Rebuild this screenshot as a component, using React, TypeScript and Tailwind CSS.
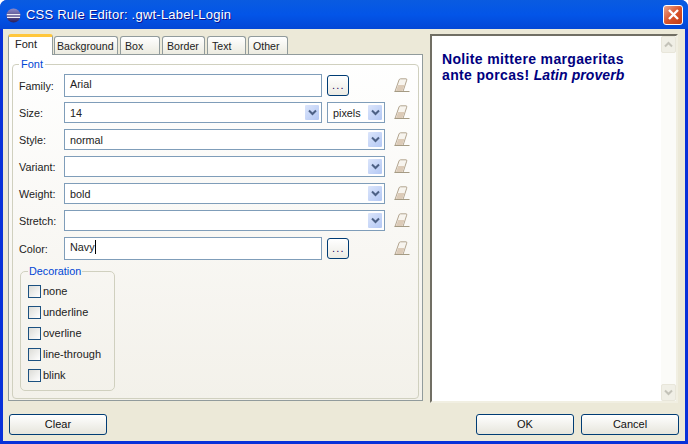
import type { ReactNode } from "react";

const Eraser = () => (
  <svg width="16" height="15" viewBox="0 0 16 15" className="block shrink-0">
    <path d="M1 13.5 L5 2 Q5.5 .8 6.5 .8 L12 .8 Q13.2 .8 12.7 2.2 L9 13.5 Z" fill="#f7f4ee" stroke="#b3a590" />
    <path d="M2 13 L4.2 7 L10.6 7 L8.4 13 Z" fill="#dccbb8" />
    <path d="M.5 13.5 H15.5" stroke="#a59b84" />
  </svg>
);

const Chevron = ({ color = "#4d6185" }: { color?: string }) => (
  <svg width="9" height="7" viewBox="0 0 9 7" className="block">
    <path d="M1 1.5 L4.5 5 L8 1.5" fill="none" stroke={color} strokeWidth="2" />
  </svg>
);

const Arrow = () => (
  <span className="ml-auto flex h-[17px] w-[16px] shrink-0 items-center justify-center rounded-[2px] border border-white bg-gradient-to-br from-[#dbe5fb] to-[#b4c8f4]">
    <Chevron />
  </span>
);

const DotsButton = () => (
  <button className="ml-[5px] flex h-[21px] w-[22px] items-start justify-center rounded-[3px] border border-[#003c74] bg-gradient-to-b from-white to-[#ecebe4] pl-px text-[11px] leading-[19px] tracking-[1.2px] text-[#1a0060]">
    ...
  </button>
);

const Field = ({ label, height, children }: { label: string; height: string; children: ReactNode }) => (
  <div className={`flex items-center ${height}`}>
    <span className="w-[45px] shrink-0 pt-[2px] text-[10.8px] text-[#222]">{label}</span>
    {children}
    <span className="ml-auto mr-[3px]">
      <Eraser />
    </span>
  </div>
);

const TextBox = ({ value, caret }: { value: string; caret?: boolean }) => (
  <div className="flex h-full w-[258px] items-center border border-[#7f9db9] bg-white pb-[3px] pl-[5px] text-[10.8px] text-[#222]">
    {value}
    {caret && <span className="h-[14px] w-px bg-black" />}
  </div>
);

const Select = ({ value, width }: { value: string; width: string }) => (
  <div className={`flex h-full items-center border border-[#7f9db9] bg-white pl-[5px] pr-px text-[10.8px] text-[#222] ${width}`}>
    <span className="pt-px">{value}</span>
    <Arrow />
  </div>
);

const tabs = [
  { name: "Background", width: "w-[64px] pl-[2px]" },
  { name: "Box", width: "w-[40px] pl-[4px]" },
  { name: "Border", width: "w-[43px] pl-[4px]" },
  { name: "Text", width: "w-[39px] pl-[4px]" },
  { name: "Other", width: "w-[40px] pl-[4px]" },
];

const decorations = ["none", "underline", "overline", "line-through", "blink"];

const FormButton = ({ label }: { label: string }) => (
  <button className="block h-[21px] w-[98px] rounded-[3px] border border-[#003c74] bg-gradient-to-b from-white to-[#e6e5dc] text-[11px] text-[#111]">
    {label}
  </button>
);

export default function App() {
  return (
    <div className="flex h-[444px] w-[688px] flex-col overflow-hidden rounded-t-[7px] bg-[#0831d9] font-['Liberation_Sans',sans-serif]">
      <div className="flex h-[29px] shrink-0 items-center bg-gradient-to-b from-[#0a5be0] via-[#0355e8] to-[#0347d6] pl-[6px] pr-[5px]">
        <svg width="15" height="15" viewBox="0 0 15 15" className="mt-[1px]">
          <defs>
            <linearGradient id="eclipse" x1="0" y1="0" x2="0" y2="1">
              <stop offset="0" stopColor="#8d8ac8" />
              <stop offset="1" stopColor="#2a1f5e" />
            </linearGradient>
          </defs>
          <circle cx="7.5" cy="7.5" r="7" fill="url(#eclipse)" />
          <path d="M.8 6.6 H14.2 M1 9.4 H14" stroke="#f0eef6" strokeWidth="1.4" />
        </svg>
        <span className="ml-[5px] text-[13px] tracking-[0.22px] text-white [text-shadow:1px_1px_#0f1089]">
          CSS Rule Editor: .gwt-Label-Login
        </span>
        <span className="ml-auto flex h-[20px] w-[20px] items-center justify-center rounded-[3px] border border-white bg-gradient-to-br from-[#e8a48c] via-[#d9542b] to-[#c23c14]">
          <svg width="13" height="13" viewBox="0 0 13 13">
            <path d="M2 2 L11 11 M11 2 L2 11" stroke="#fff" strokeWidth="2.4" />
          </svg>
        </span>
      </div>

      <div className="mx-[3px] mb-[3px] flex min-h-0 flex-1 flex-col bg-[#ece9d8]">
        <div className="flex min-h-0 flex-1 pl-[5px] pr-[7px] pt-[5px]">
          <div className="mb-[2px] flex w-[415px] shrink-0 flex-col">
            <div className="flex h-[20px] shrink-0 items-end">
              <div className="relative z-10 -mb-px h-[21px] w-[45px] rounded-t-[3px] border-x border-[#919b9c] border-t-[3px] border-t-[#ffc73c] bg-white pl-[6px] text-[11px] leading-[15px] text-[#222]">
                Font
              </div>
              <div className="flex gap-[2px] pl-px">
                {tabs.map((tab) => (
                  <div
                    key={tab.name}
                    className={`h-[18px] rounded-t-[3px] border border-b-0 border-[#919b9c] bg-gradient-to-b from-white to-[#ecebe0] text-[10.6px] leading-[18px] text-[#222] ${tab.width}`}
                  >
                    {tab.name}
                  </div>
                ))}
              </div>
            </div>

            <div className="min-h-0 flex-1 border border-[#919b9c] bg-gradient-to-b from-white to-[#f3f1ea] p-[3px]">
              <fieldset className="h-[341px] rounded-[4px] border border-[#d0d0bf] pl-[6px] pr-[5px]">
                <legend className="px-[2px] text-[11px] leading-[13px] text-[#0046d5]">Font</legend>
                <div className="mt-[3px] flex flex-col">
                  <Field label="Family:" height="h-[23px]">
                    <TextBox value="Arial" />
                    <DotsButton />
                  </Field>
                  <div className="mt-[5px]">
                    <Field label="Size:" height="h-[21px]">
                      <Select value="14" width="w-[258px]" />
                      <span className="ml-[5px] h-full">
                        <Select value="pixels" width="w-[58px]" />
                      </span>
                    </Field>
                  </div>
                  <div className="mt-[6px] flex flex-col gap-[6px]">
                    {[
                      ["Style:", "normal"],
                      ["Variant:", ""],
                      ["Weight:", "bold"],
                      ["Stretch:", ""],
                    ].map(([label, value]) => (
                      <Field key={label} label={label} height="h-[21px]">
                        <Select value={value} width="w-[321px]" />
                      </Field>
                    ))}
                  </div>
                  <div className="mt-[6px]">
                    <Field label="Color:" height="h-[23px]">
                      <TextBox value="Navy" caret />
                      <DotsButton />
                    </Field>
                  </div>
                </div>
                <fieldset className="ml-px mt-[5px] h-[126px] w-[95px] rounded-[5px] border border-[#d0d0bf] pl-[7px]">
                  <legend className="px-[1px] text-[10.8px] leading-[13px] text-[#0046d5]">Decoration</legend>
                  <div className="mt-[7px] flex flex-col gap-[8px]">
                    {decorations.map((item) => (
                      <label key={item} className="flex h-[13px] items-center gap-[2px] text-[11px] text-[#222]">
                        <span className="h-[13px] w-[13px] border border-[#1c5180] bg-gradient-to-br from-[#dcdcd7] to-white" />
                        {item}
                      </label>
                    ))}
                  </div>
                </fieldset>
              </fieldset>
            </div>
          </div>

          <div className="ml-[7px] flex min-w-0 flex-1 border-2 border-[#716f64] border-r-[#f1efe2] border-b-[#f1efe2] bg-white">
            <p className="flex-1 pl-[10px] pt-[15px] text-[14px] font-bold leading-[16px] tracking-[0.35px] text-[#000080]">
              Nolite mittere margaeritas
              <br />
              ante porcas! <em className="tracking-[0.1px]">Latin proverb</em>
            </p>
            <div className="flex w-[15px] flex-col justify-between bg-[#fbfbf8]">
              <span className="flex h-[17px] items-center justify-center rounded-[2px] border border-[#e8e6da] bg-[#f0efe6]">
                <span className="rotate-180">
                  <Chevron color="#c3c2b8" />
                </span>
              </span>
              <span className="flex h-[17px] items-center justify-center rounded-[2px] border border-[#e8e6da] bg-[#f0efe6]">
                <Chevron color="#c3c2b8" />
              </span>
            </div>
          </div>
        </div>

        <div className="flex h-[38px] shrink-0 items-start pl-[6px] pr-[6px] pt-[11px]">
          <FormButton label="Clear" />
          <span className="ml-auto mr-[7px]">
            <FormButton label="OK" />
          </span>
          <FormButton label="Cancel" />
        </div>
      </div>
    </div>
  );
}
